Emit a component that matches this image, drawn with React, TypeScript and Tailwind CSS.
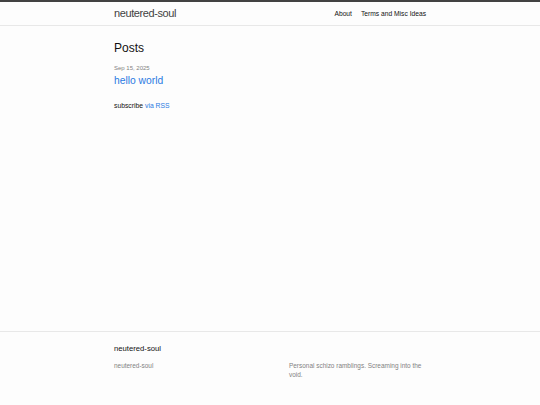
import React from "react";

const App: React.FC = () => {
  return (
    <div
      className="min-h-screen flex flex-col bg-[#fdfdfd] text-[#111]"
      style={{ fontFamily: '"Liberation Sans", Arial, sans-serif' }}
    >
      <header className="border-t-2 border-b border-t-[#424242] border-b-[#e8e8e8]">
        <div className="w-[312px] mx-auto flex justify-between items-center h-[23px]">
          <a className="text-[11px] tracking-[-0.4px] text-[#424242] leading-[23px]">
            neutered-soul
          </a>
          <nav className="flex gap-[9px] text-[6.7px] leading-[23px] text-[#111]">
            <a>About</a>
            <a>Terms and Misc Ideas</a>
          </nav>
        </div>
      </header>

      <main className="flex-1 pt-[13px]">
        <div className="w-[312px] mx-auto">
          <h2 className="text-[12px] leading-[18px] mb-[6.5px]">Posts</h2>
          <ul className="mb-[13px]">
            <li>
              <span className="block text-[6px] leading-[9px] text-[#828282]">
                Sep 15, 2025
              </span>
              <h3 className="text-[10.3px] leading-[15.5px] text-[#2a7ae2]">
                <a>hello world</a>
              </h3>
            </li>
          </ul>
          <p className="text-[6.8px] leading-[10px]">
            subscribe <a className="text-[#2a7ae2]">via RSS</a>
          </p>
        </div>
      </main>

      <footer className="border-t border-[#e8e8e8] pt-[11px] pb-[25px]">
        <div className="w-[312px] mx-auto">
          <h2 className="text-[7.7px] leading-[11.6px] mb-[6.5px]">neutered-soul</h2>
          <div className="flex text-[6.45px] leading-[9.7px] text-[#828282]">
            <div className="w-[175px]">
              <p>neutered-soul</p>
            </div>
            <div className="w-[137px]">
              <p>Personal schizo ramblings. Screaming into the void.</p>
            </div>
          </div>
        </div>
      </footer>
    </div>
  );
};

export default App;
